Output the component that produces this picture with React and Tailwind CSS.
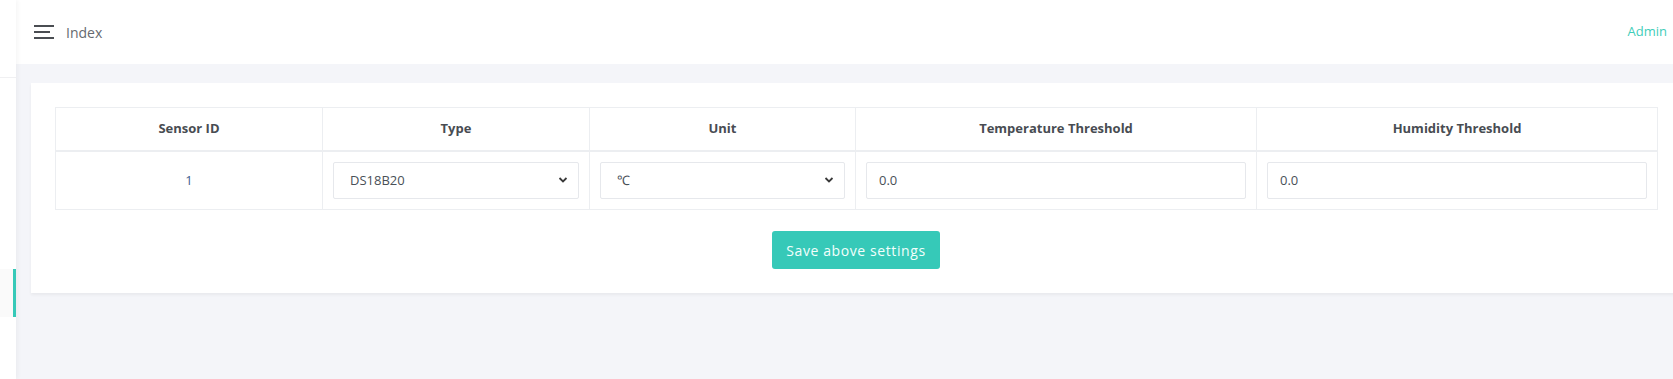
import React from "react";

const headers = [
    { title: "Sensor ID", width: "w-[267px]" },
    { title: "Type", width: "w-[267px]" },
    { title: "Unit", width: "w-[266px]" },
    { title: "Temperature Threshold", width: "w-[401px]" },
    { title: "Humidity Threshold", width: "w-[401px]" },
];

const Chevron = () => (
    <svg
        className="pointer-events-none absolute right-[11px] top-1/2 -translate-y-1/2"
        width="10"
        height="7"
        viewBox="0 0 10 7"
        fill="none"
    >
        <path d="M1.5 1.5L5 5L8.5 1.5" stroke="#3a3a3a" strokeWidth="1.8" />
    </svg>
);

const Select = ({ value, options }) => (
    <div className="relative">
        <select
            defaultValue={value}
            className="h-[37px] w-full appearance-none rounded-[2px] border border-[#e6e8ec] bg-white pl-[16px] text-[13px] text-[#495057] outline-none"
        >
            {options.map((o) => (
                <option key={o}>{o}</option>
            ))}
        </select>
        <Chevron />
    </div>
);

const Input = ({ value }) => (
    <input
        type="text"
        defaultValue={value}
        className="h-[37px] w-full rounded-[2px] border border-[#e6e8ec] bg-white px-[12px] text-[13px] text-[#495057] outline-none"
    />
);

const App = () => {
    return (
        <div className="flex h-[379px] w-[1673px] overflow-hidden bg-[#f4f5f9] font-['Open_Sans',sans-serif]">
            {/* sidebar */}
            <aside className="relative z-10 flex w-[16px] shrink-0 flex-col bg-white shadow-[2px_0_4px_rgba(0,0,0,0.04)]">
                <div className="h-[78px] border-b border-[#f0f0f2]"></div>
                <div className="mt-[191px] h-[48px] border-r-[3px] border-[#36c9b8] bg-[#fafafa]"></div>
            </aside>

            <div className="flex min-w-0 flex-1 flex-col">
                {/* header */}
                <header className="flex h-[64px] shrink-0 items-center justify-between bg-white pl-[18px] pr-[6px]">
                    <div className="flex items-center">
                        <svg width="20" height="14" viewBox="0 0 20 14" fill="#4a4d52">
                            <rect x="0" y="0" width="20" height="2" />
                            <rect x="0" y="6" width="16" height="2" />
                            <rect x="0" y="12" width="20" height="2" />
                        </svg>
                        <span className="ml-[12px] text-[14px] text-[#666a70]">Index</span>
                    </div>
                    <span className="text-[13px] text-[#3fcdb9]">Admin</span>
                </header>

                {/* content */}
                <main className="pl-[15px] pt-[19px]">
                    <div className="w-[1650px] bg-white p-[24px] shadow-[0_2px_3px_rgba(0,0,20,0.05)]">
                        <table className="w-[1602px] table-fixed border-collapse">
                            <thead>
                                <tr>
                                    {headers.map((item, index) => (
                                        <th
                                            key={index}
                                            className={`${item.width} h-[43px] border border-b-2 border-[#eceef1] text-center text-[13px] font-bold text-[#484c52]`}
                                        >
                                            {item.title}
                                        </th>
                                    ))}
                                </tr>
                            </thead>
                            <tbody>
                                <tr>
                                    <td className="h-[59px] border border-[#eceef1] text-center text-[13px] text-[#3f5f8f]">
                                        1
                                    </td>
                                    <td className="border border-[#eceef1] px-[10px]">
                                        <Select value="DS18B20" options={["DS18B20", "DHT11", "DHT22"]} />
                                    </td>
                                    <td className="border border-[#eceef1] px-[10px]">
                                        <Select value="℃" options={["℃", "℉"]} />
                                    </td>
                                    <td className="border border-[#eceef1] px-[10px]">
                                        <Input value="0.0" />
                                    </td>
                                    <td className="border border-[#eceef1] px-[10px]">
                                        <Input value="0.0" />
                                    </td>
                                </tr>
                            </tbody>
                        </table>

                        <div className="mt-[21px] flex justify-center">
                            <button className="h-[38px] w-[168px] rounded-[3px] bg-[#36c9b8] text-[14px] tracking-[0.6px] text-[#f2fffc]">
                                Save above settings
                            </button>
                        </div>
                    </div>
                </main>
            </div>
        </div>
    );
};

export default App;
